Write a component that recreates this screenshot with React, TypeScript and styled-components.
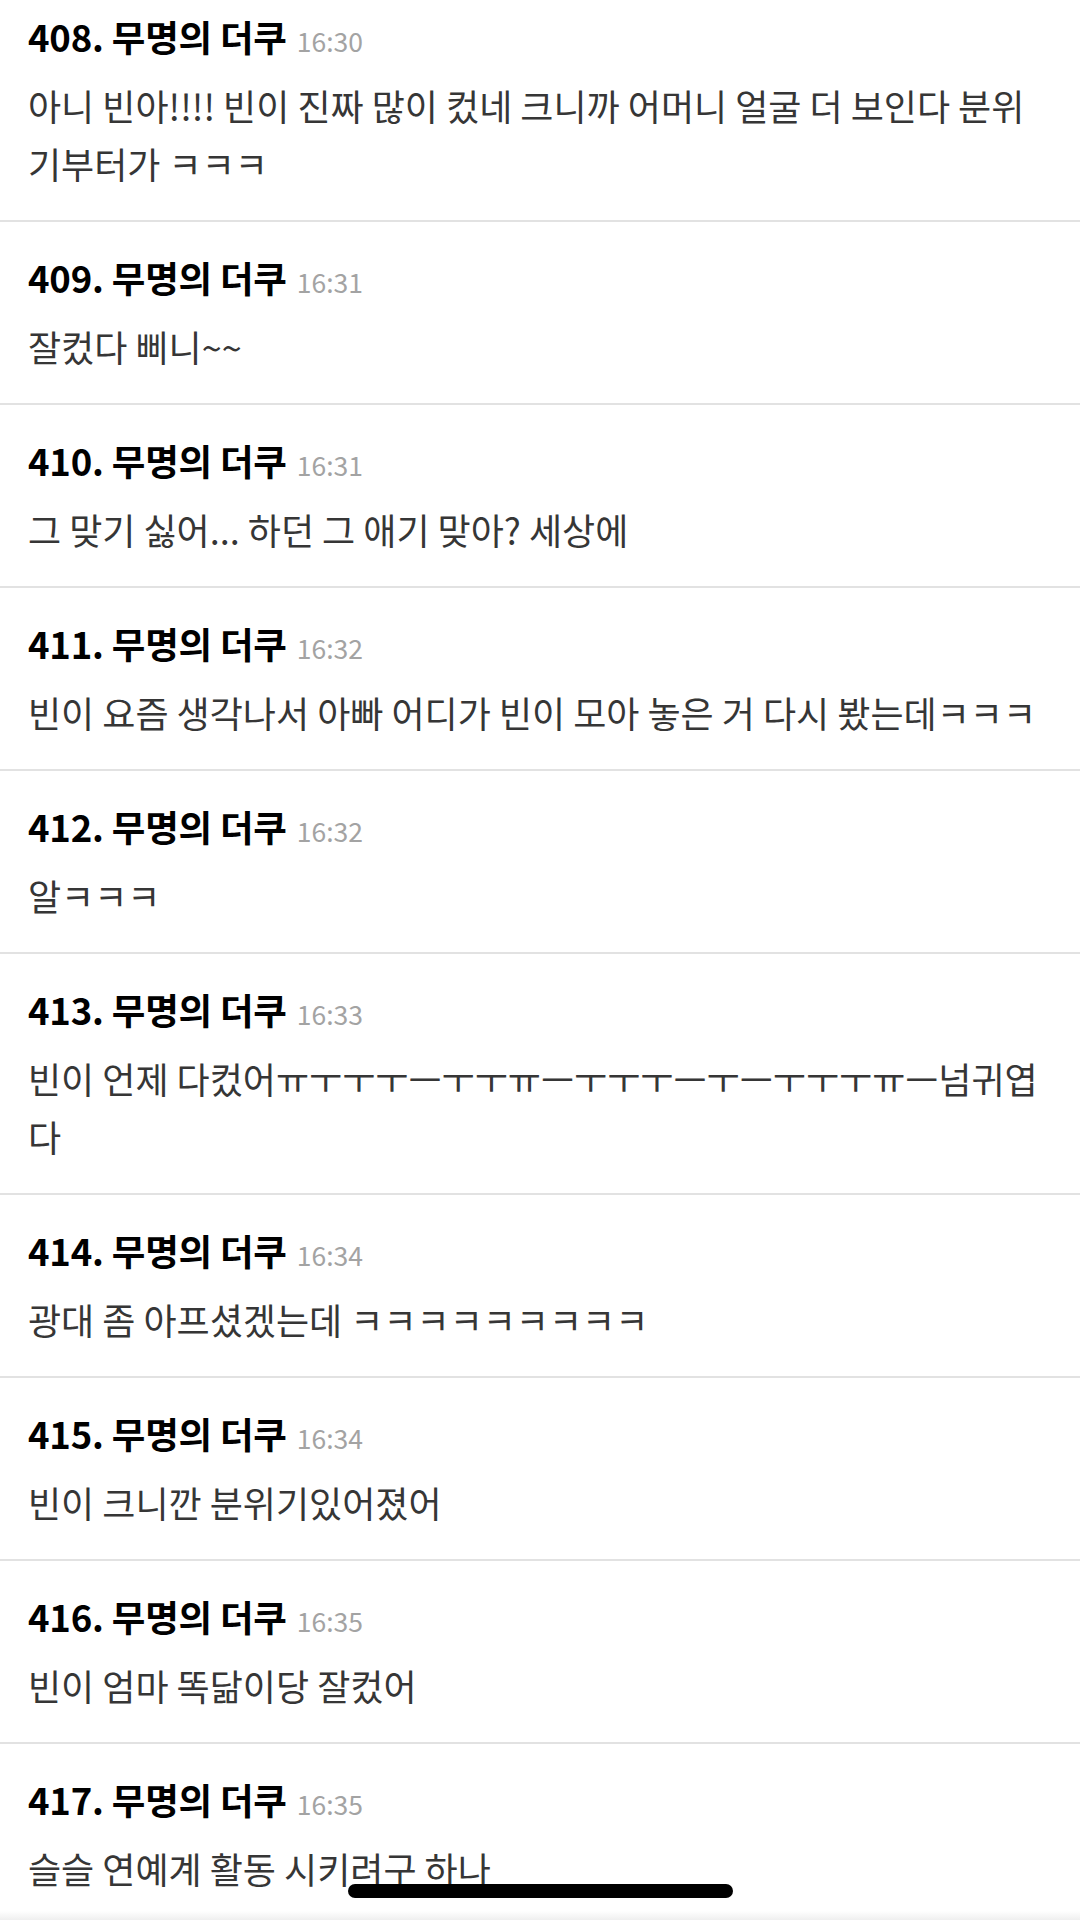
import { memo } from "react";
import styled, { createGlobalStyle } from "styled-components";

const GlobalStyle = createGlobalStyle`
  html, body {
    margin: 0;
    padding: 0;
    background: #ffffff;
  }
  body {
    font-family: "Noto Sans CJK KR", "Noto Sans", sans-serif;
  }
`;

const Screen = styled.div`
  position: relative;
  width: 1080px;
  height: 1920px;
  overflow: hidden;
  background: #ffffff;
`;

const List = styled.ul`
  list-style: none;
  margin: -19px 0 0;
  padding: 0;
`;

const Comment = styled.li`
  padding: 33px 40px 28px 28px;
  border-bottom: 2px solid #e2e2e2;
`;

const Header = styled.div`
  display: flex;
  align-items: baseline;
  gap: 10px;
  height: 45px;
  line-height: 45px;
`;

const Author = styled.span`
  font-size: 36.5px;
  font-weight: 700;
  color: #000000;
  letter-spacing: -0.2px;
`;

const Time = styled.span`
  font-size: 26.5px;
  color: #a3a3a3;
`;

const Body = styled.p`
  margin: 17px 0 0;
  font-size: 36px;
  line-height: 58px;
  color: #363636;
`;

const BottomEdge = styled.div`
  position: absolute;
  left: 0;
  right: 0;
  bottom: 0;
  height: 9px;
  background: linear-gradient(#ffffff, #efefef);
`;

const HomeIndicator = styled.div`
  position: absolute;
  left: 348px;
  bottom: 22px;
  width: 385px;
  height: 14px;
  border-radius: 7px;
  background: #000000;
`;

const comments = [
  { no: 408, time: "16:30", text: "아니 빈아!!!! 빈이 진짜 많이 컸네 크니까 어머니 얼굴 더 보인다 분위기부터가 ㅋㅋㅋ" },
  { no: 409, time: "16:31", text: "잘컸다 삐니~~" },
  { no: 410, time: "16:31", text: "그 맞기 싫어... 하던 그 애기 맞아? 세상에" },
  { no: 411, time: "16:32", text: "빈이 요즘 생각나서 아빠 어디가 빈이 모아 놓은 거 다시 봤는데ㅋㅋㅋ" },
  { no: 412, time: "16:32", text: "알ㅋㅋㅋ" },
  { no: 413, time: "16:33", text: "빈이 언제 다컸어ㅠㅜㅜㅜㅡㅜㅜㅠㅡㅜㅜㅜㅡㅜㅡㅜㅜㅜㅠㅡ넘귀엽다" },
  { no: 414, time: "16:34", text: "광대 좀 아프셨겠는데 ㅋㅋㅋㅋㅋㅋㅋㅋㅋ" },
  { no: 415, time: "16:34", text: "빈이 크니깐 분위기있어졌어" },
  { no: 416, time: "16:35", text: "빈이 엄마 똑닮이당 잘컸어" },
  { no: 417, time: "16:35", text: "슬슬 연예계 활동 시키려구 하나" },
];

const App = () => {
  return (
    <>
      <GlobalStyle />
      <Screen>
        <List>
          {comments.map(({ no, time, text }) => (
            <Comment key={no}>
              <Header>
                <Author>{no}. 무명의 더쿠</Author>
                <Time>{time}</Time>
              </Header>
              <Body>{text}</Body>
            </Comment>
          ))}
        </List>
        <BottomEdge />
        <HomeIndicator />
      </Screen>
    </>
  );
};

export default memo(App);
